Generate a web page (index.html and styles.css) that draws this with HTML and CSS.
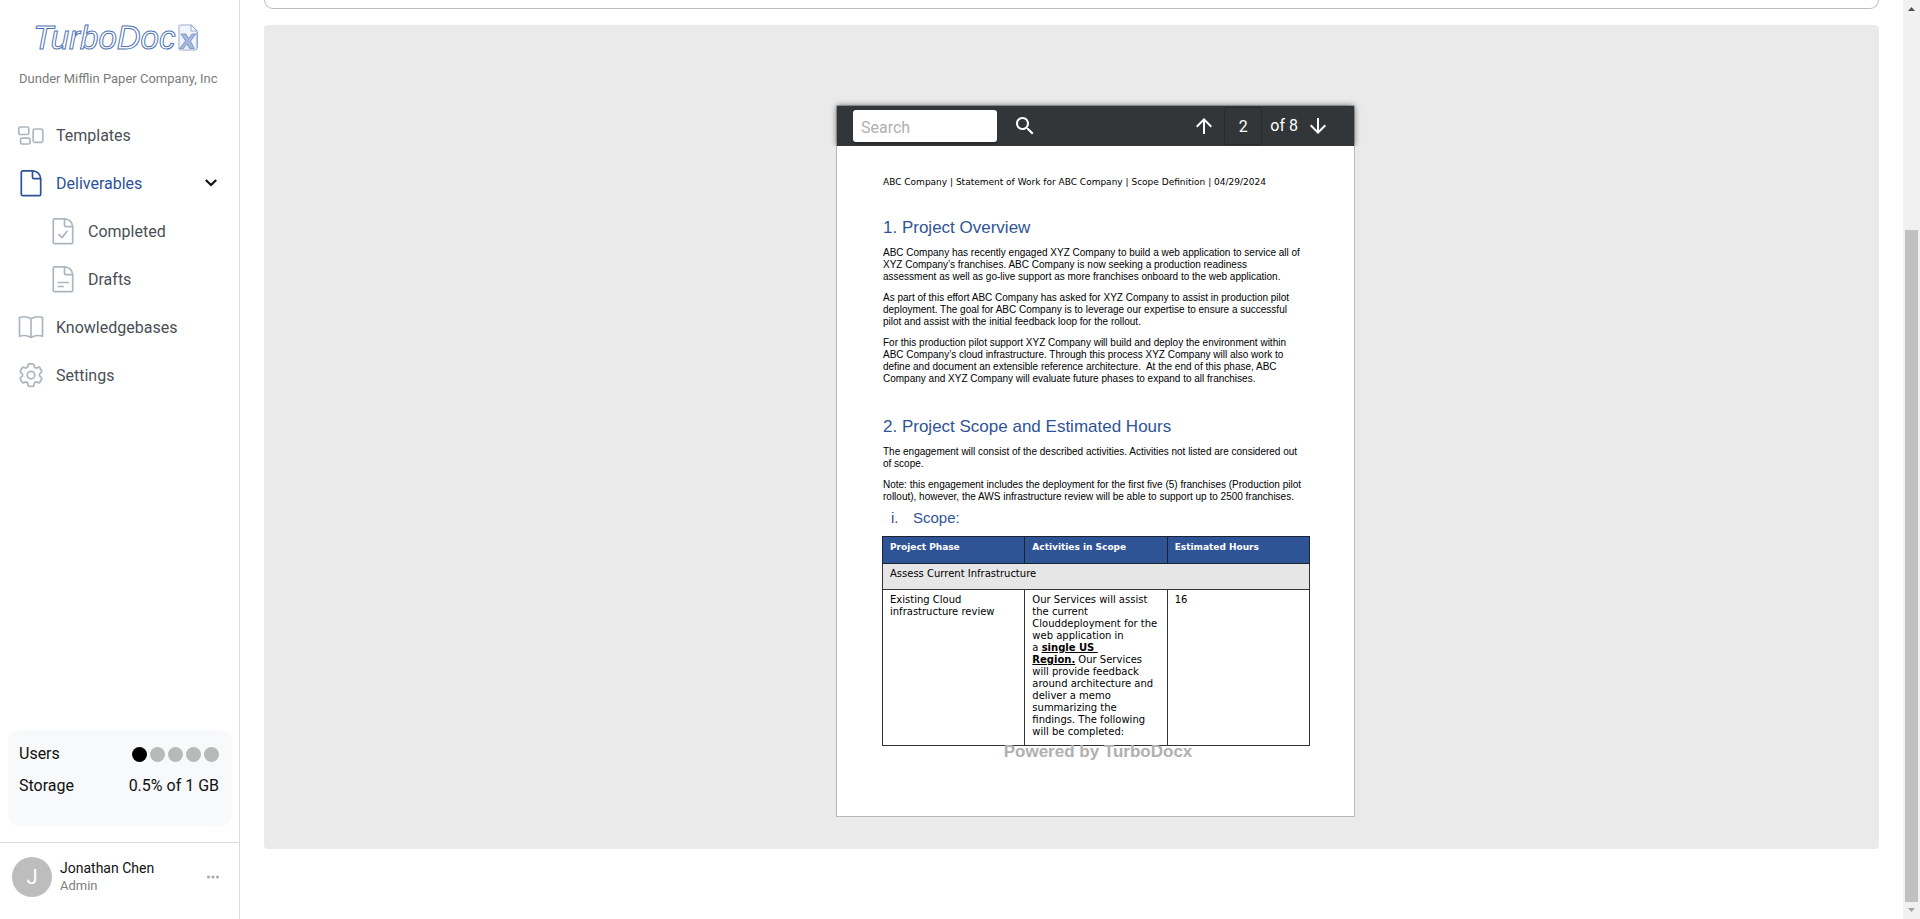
FILE: index.html
```html
<!DOCTYPE html>
<html lang="en">
<head>
<meta charset="utf-8">
<title>TurboDocx - Deliverables</title>
<link rel="stylesheet" href="styles.css">
</head>
<body>
<div class="app">
  <aside class="sidebar">
    <div class="brand">
      <span class="brand-name">TurboDoc</span>
      <svg class="brand-mark" width="20" height="27" viewBox="0 0 20 27" fill="none" role="img" aria-label="x">
        <path d="M1 3a2 2 0 0 1 2-2h10l6 6v17a2 2 0 0 1-2 2H3a2 2 0 0 1-2-2z" fill="#f1f4fa" stroke="#b9c8e3" stroke-width="1.500"/>
        <path d="M13 1v6h6z" fill="#fff" stroke="#8fa8d2" stroke-width="1"/>
        <path d="M3 10h5l2.500 4.500L14 10h4l-5.500 7 4 7.500h-5l-2.500-4.500-3.500 4.500H1.500l6-7.500z" fill="#a3b8db" stroke="#7390c4" stroke-width=".8"/>
        <path d="M19.300 8v16" stroke="#7d9bcc"/>
      </svg>
    </div>
    <p class="company">Dunder Mifflin Paper Company, Inc</p>

    <nav class="nav">
      <a class="nav-item" href="#">
        <svg width="30" height="30" viewBox="0 0 30 30" class="icon">
          <rect x="2.800" y="7" width="10" height="7.500" rx="1.500"/><rect x="4.500" y="18.200" width="9.500" height="5.800" rx="1.500"/><rect x="17.200" y="9" width="9.600" height="13.300" rx="1.500"/>
        </svg>
        <span>Templates</span>
      </a>
      <a class="nav-item active" href="#">
        <svg width="30" height="30" viewBox="0 0 30 30" class="icon">
          <path d="M16.500 2.800H6.800a1.500 1.500 0 0 0-1.500 1.500v21.900a1.500 1.500 0 0 0 1.500 1.500h16.400a1.500 1.500 0 0 0 1.500-1.500V11c0-4.500-3.700-8.200-8.200-8.200z"/><path d="M16.500 2.800v6.400a1.500 1.500 0 0 0 1.500 1.500h6.600"/>
        </svg>
        <span>Deliverables</span>
        <svg class="chevron" width="14" height="10" viewBox="0 0 14 10"><path d="M1.800 2l5.200 5L12.200 2"/></svg>
      </a>
      <a class="nav-item sub" href="#">
        <svg width="30" height="30" viewBox="0 0 30 30" class="icon">
          <path d="M16.500 2.800H6.800a1.500 1.500 0 0 0-1.500 1.500v21.900a1.500 1.500 0 0 0 1.500 1.500h16.400a1.500 1.500 0 0 0 1.500-1.500V11c0-4.500-3.700-8.200-8.200-8.200z"/><path d="M16.500 2.800v6.400a1.500 1.500 0 0 0 1.500 1.500h6.600M11 18.600l3 3L19 15.300"/>
        </svg>
        <span>Completed</span>
      </a>
      <a class="nav-item sub" href="#">
        <svg width="30" height="30" viewBox="0 0 30 30" class="icon">
          <path d="M16.500 2.800H6.800a1.500 1.500 0 0 0-1.500 1.500v21.900a1.500 1.500 0 0 0 1.500 1.500h16.400a1.500 1.500 0 0 0 1.500-1.500V11c0-4.500-3.700-8.200-8.200-8.200z"/><path d="M16.500 2.800v6.400a1.500 1.500 0 0 0 1.500 1.500h6.600M10.300 18.500h10M10.300 22.500h5"/>
        </svg>
        <span>Drafts</span>
      </a>
      <a class="nav-item" href="#">
        <svg width="30" height="30" viewBox="0 0 30 30" class="icon">
          <path d="M15 6.800C11.500 4.600 7 4.400 3.500 5.500v18.800c3.800-1.300 8-.9 11.500 1.200 3.500-2.100 7.700-2.500 11.500-1.200V5.500C23 4.400 18.500 4.600 15 6.800zM15 6.800v18.700"/>
        </svg>
        <span>Knowledgebases</span>
      </a>
      <a class="nav-item" href="#">
        <svg width="30" height="30" viewBox="0 0 24 24" class="icon gear">
          <path d="M9.594 3.940c.09-.542.560-.940 1.110-.940h2.593c.550 0 1.020.398 1.110.940l.213 1.281c.063.374.313.686.645.870.074.040.147.083.220.127.325.196.720.257 1.075.124l1.217-.456a1.125 1.125 0 0 1 1.370.490l1.296 2.247a1.125 1.125 0 0 1-.260 1.431l-1.003.827c-.293.241-.438.613-.430.992a7.723 7.723 0 0 1 0 .255c-.008.378.137.750.430.991l1.004.827c.424.350.534.955.260 1.430l-1.298 2.247a1.125 1.125 0 0 1-1.369.491l-1.217-.456c-.355-.133-.750-.072-1.076.124a6.470 6.470 0 0 1-.220.128c-.331.183-.581.495-.644.869l-.213 1.281c-.090.543-.560.940-1.110.940h-2.594c-.550 0-1.019-.398-1.110-.940l-.213-1.281c-.062-.374-.312-.686-.644-.870a6.520 6.520 0 0 1-.220-.127c-.325-.196-.720-.257-1.076-.124l-1.217.456a1.125 1.125 0 0 1-1.369-.490l-1.297-2.247a1.125 1.125 0 0 1 .260-1.431l1.004-.827c.292-.240.437-.613.430-.991a6.932 6.932 0 0 1 0-.255c.007-.380-.138-.751-.430-.992l-1.004-.827a1.125 1.125 0 0 1-.260-1.430l1.297-2.247a1.125 1.125 0 0 1 1.370-.491l1.216.456c.356.133.751.072 1.076-.124.072-.044.146-.086.220-.128.332-.183.582-.495.644-.869l.214-1.280z"/><circle cx="12" cy="12" r="3"/>
        </svg>
        <span>Settings</span>
      </a>
    </nav>

    <section class="usage">
      <div class="usage-row"><span>Users</span>
        <span class="seats"><i class="seat used"></i><i class="seat"></i><i class="seat"></i><i class="seat"></i><i class="seat"></i></span>
      </div>
      <div class="usage-row"><span>Storage</span><span>0.5% of 1 GB</span></div>
    </section>

    <footer class="account">
      <span class="avatar">J</span>
      <div class="person"><span class="person-name">Jonathan Chen</span><span class="person-role">Admin</span></div>
      <button class="more" type="button" aria-label="Account menu">
        <svg width="14" height="6" viewBox="0 0 14 6"><circle cx="2.500" cy="3" r="1.600"/><circle cx="7" cy="3" r="1.600"/><circle cx="11.500" cy="3" r="1.600"/></svg>
      </button>
    </footer>
  </aside>

  <main class="main">
    <div class="card-end"></div>
    <section class="stage">
      <article class="viewer">
        <header class="toolbar">
          <input class="search" type="text" placeholder="Search" aria-label="Search">
          <button class="tool" type="button" aria-label="Find"><svg width="24" height="24" viewBox="0 0 24 24"><path d="M15.500 14h-.790l-.280-.270C15.410 12.590 16 11.110 16 9.500 16 5.910 13.090 3 9.500 3S3 5.910 3 9.500 5.910 16 9.500 16c1.610 0 3.090-.590 4.230-1.570l.270.280v.790l5 4.990L20.490 19l-4.990-5zm-6 0C7.010 14 5 11.990 5 9.500S7.010 5 9.500 5 14 7.010 14 9.500 11.990 14 9.500 14z"/></svg></button>
          <div class="pager">
            <button class="tool" type="button" aria-label="Previous page"><svg width="24" height="24" viewBox="0 0 24 24"><path d="M4 12l1.410 1.410L11 7.830V20h2V7.830l5.580 5.590L20 12l-8-8-8 8z"/></svg></button>
            <input class="page-no" type="text" value="2" aria-label="Page number">
            <span class="page-count">of 8</span>
            <button class="tool" type="button" aria-label="Next page"><svg width="24" height="24" viewBox="0 0 24 24"><path d="M20 12l-1.410-1.410L13 16.170V4h-2v12.170l-5.580-5.590L4 12l8 8 8-8z"/></svg></button>
          </div>
        </header>
        <div class="page">
          <p class="running-head">ABC Company | Statement of Work for ABC Company | Scope Definition | 04/29/2024</p>
          <h2>1. Project Overview</h2>
          <p>ABC Company has recently engaged XYZ Company to build a web application to service all of<br>XYZ Company’s franchises. ABC Company is now seeking a production readiness<br>assessment as well as go-live support as more franchises onboard to the web application.</p>
          <p>As part of this effort ABC Company has asked for XYZ Company to assist in production pilot<br>deployment. The goal for ABC Company is to leverage our expertise to ensure a successful<br>pilot and assist with the initial feedback loop for the rollout.</p>
          <p>For this production pilot support XYZ Company will build and deploy the environment within<br>ABC Company’s cloud infrastructure. Through this process XYZ Company will also work to<br>define and document an extensible reference architecture.&nbsp; At the end of this phase, ABC<br>Company and XYZ Company will evaluate future phases to expand to all franchises.</p>
          <h2 class="second">2. Project Scope and Estimated Hours</h2>
          <p>The engagement will consist of the described activities. Activities not listed are considered out<br>of scope.</p>
          <p>Note: this engagement includes the deployment for the first five (5) franchises (Production pilot<br>rollout), however, the AWS infrastructure review will be able to support up to 2500 franchises.</p>
          <h3><span class="numeral">i.</span>Scope:</h3>
          <table class="scope">
            <thead><tr><th>Project Phase</th><th>Activities in Scope</th><th>Estimated Hours</th></tr></thead>
            <tbody>
              <tr class="phase"><td colspan="3">Assess Current Infrastructure</td></tr>
              <tr class="detail"><td>Existing Cloud<br>infrastructure review</td>
                <td>Our Services will assist<br>the current<br>Clouddeployment for the<br>web application in<br>a <b>single US&nbsp;<br>Region.</b> Our Services<br>will provide feedback<br>around architecture and<br>deliver a memo<br>summarizing the<br>findings. The following<br>will be completed:</td>
                <td>16</td></tr>
            </tbody>
          </table>
          <div class="watermark">Powered by TurboDocx</div>
        </div>
      </article>
    </section>
  </main>

  <div class="scrollbar" aria-hidden="true">
    <svg class="up" width="7" height="4" viewBox="0 0 7 4"><path d="M3.500 0L7 4H0z"/></svg>
    <div class="track"><div class="thumb"></div></div>
    <svg class="down" width="7" height="4" viewBox="0 0 7 4"><path d="M0 0h7L3.500 4z"/></svg>
  </div>
</div>
</body>
</html>
```

FILE: styles.css
```css
* { box-sizing: border-box; }

body {
  margin: 0;
  font-family: Roboto, "Liberation Sans", sans-serif;
  font-size: 16px;
  color: #111;
  background: #fff;
}

p, h2, h3 { margin: 0; font-weight: 400; }
button { border: 0; padding: 0; background: none; }

.app {
  display: grid;
  grid-template-columns: 240px 1fr 17px;
  height: 100vh;
  overflow: hidden;
}

/* Sidebar */
.sidebar {
  display: flex;
  flex-direction: column;
  border-right: 1px solid #dcdcdc;
}

.brand {
  display: flex;
  align-items: center;
  padding: 19px 0 0 33px;
  height: 56px;
}
.brand-name {
  font: italic 33px/36px "Liberation Sans", Arial, sans-serif;
  color: #fff;
  -webkit-text-stroke: 1px #4f74b3;
}
.brand-mark { margin-left: 3px; }

.company {
  padding: 13px 20px 12px 19px;
  font-size: 13px;
  line-height: 20px;
  color: #7c7c7c;
  white-space: nowrap;
}

.nav {
  display: flex;
  flex-direction: column;
  margin-top: 10px;
}
.nav-item {
  display: flex;
  align-items: center;
  gap: 10px;
  height: 48px;
  padding: 0 21px 0 16px;
  color: #4b4f56;
  text-decoration: none;
}
.nav-item.sub { padding-left: 48px; }
.nav-item.active { color: #2c5297; }

.icon {
  fill: none;
  stroke: #adb5bf;
  stroke-width: 1.7;
  stroke-linecap: round;
  stroke-linejoin: round;
}
.gear { stroke-width: 1.4; }
.active .icon { stroke: #2c5297; }
.chevron {
  margin-left: auto;
  fill: none;
  stroke: #111;
  stroke-width: 2.2;
}

.usage {
  display: flex;
  flex-direction: column;
  gap: 8px;
  height: 96px;
  margin: auto 7px 16px 8px;
  padding: 12px 13px 12px 11px;
  background: #f8f9fb;
  border-radius: 12px;
}
.usage-row {
  display: flex;
  justify-content: space-between;
  align-items: center;
  line-height: 24px;
}
.seats { display: flex; gap: 3px; }
.seat {
  width: 15px;
  height: 15px;
  border-radius: 50%;
  background: #b8b9b9;
}
.seat.used { background: #000; }

.account {
  display: flex;
  align-items: center;
  height: 77px;
  padding: 0 19px 8px 12px;
  border-top: 1px solid #dcdcdc;
}
.avatar {
  width: 40px;
  height: 40px;
  border-radius: 50%;
  background: #bdbdbd;
  color: #fff;
  font-size: 20px;
  line-height: 40px;
  text-align: center;
}
.person {
  display: flex;
  flex-direction: column;
  margin-left: 8px;
  line-height: 18px;
}
.person-name { font-size: 14px; }
.person-role { font-size: 13px; color: #808080; }
.more { margin-left: auto; line-height: 0; }
.more svg { fill: #a9adb3; }

/* Main column */
.main { padding: 0 24px; }
.card-end {
  height: 9px;
  margin-bottom: 16px;
  border: 1px solid #bdbdbd;
  border-top: 0;
  border-radius: 0 0 10px 10px;
}
.stage {
  display: flex;
  justify-content: center;
  padding: 80px 0 32px 48px;
  background: #eaeaea;
  border-radius: 4px;
}

.viewer {
  width: 519px;
  border: 1px solid #b8b8b8;
  background: #fff;
}
.toolbar {
  display: flex;
  align-items: center;
  height: 40px;
  padding: 0 24px 0 16px;
  background: #323639;
  box-shadow: 0 0 6px rgba(0, 0, 0, .6);
  clip-path: inset(-8px -8px 0 -8px);
  color: #fff;
}
.search {
  width: 144px;
  height: 32px;
  margin-right: 16px;
  padding: 2px 8px 0;
  border: 0;
  border-radius: 3px;
  background: #fff;
  font: 16px Roboto, sans-serif;
  box-shadow: 0 2px 1px #282b2d;
}
.search::placeholder { color: #b0b0b0; }
.tool { display: flex; color: #fff; }
.tool svg { fill: #fff; }
.pager {
  display: flex;
  align-items: center;
  margin-left: auto;
}
.page-no {
  width: 38px;
  height: 38px;
  margin: 0 8px;
  padding: 0;
  border: 1px solid #292c2f;
  border-radius: 3px;
  background: none;
  color: #fff;
  font: 16px Roboto, sans-serif;
  text-align: center;
}
.page-count {
  margin-right: 8px;
  line-height: 20px;
  padding-bottom: 1px;
}

/* Document page */
.page {
  padding: 30px 46px 54px;
  font: 10px/12px "Liberation Sans", Arial, sans-serif;
  color: #000;
  white-space: nowrap;
}
.page p + p { margin-top: 9px; }
.page .running-head {
  font: 9px/12px "DejaVu Sans", Verdana, sans-serif;
}
.page h2 {
  margin: 30px 0 9px;
  font-size: 17px;
  line-height: 20px;
  color: #2f5496;
}
.page h2.second { margin-top: 32px; }
.page h3 {
  display: flex;
  margin: 5px 0 8px;
  padding-left: 8px;
  font-size: 15px;
  line-height: 20px;
  color: #2f5496;
}
.numeral { width: 22px; }

.scope {
  width: calc(100% + 3px);
  margin-left: -1px;
  table-layout: fixed;
  border-collapse: collapse;
  font: 10px/12px "DejaVu Sans", Verdana, sans-serif;
}
.scope th, .scope td {
  padding: 4px 0 9px 7px;
  border: 1px solid #333;
  text-align: left;
  vertical-align: top;
}
.scope th {
  padding-bottom: 10px;
  font-size: 9px;
  background: #2f5496;
  color: #fff;
  border-color: #1a2233;
}
.scope .detail td { padding-bottom: 7px; }
.scope b { text-decoration: underline; }
.phase td { background: #e6e6e6; }
.watermark {
  margin: -4px 0 0 5px;
  font-size: 17px;
  font-weight: 700;
  line-height: 20px;
  text-align: center;
  color: #b0b0b0;
}

/* Scrollbar */
.scrollbar {
  display: flex;
  flex-direction: column;
  align-items: center;
  padding: 7px 2px;
  background: #f1f1f1;
}
.scrollbar .up { fill: #505050; }
.scrollbar .down { fill: #a3a3a3; }
.track {
  display: flex;
  flex: 1;
  align-self: stretch;
  margin: 6px 0;
  padding-top: 213px;
}
.thumb { flex: 1; background: #c1c1c1; }
```
